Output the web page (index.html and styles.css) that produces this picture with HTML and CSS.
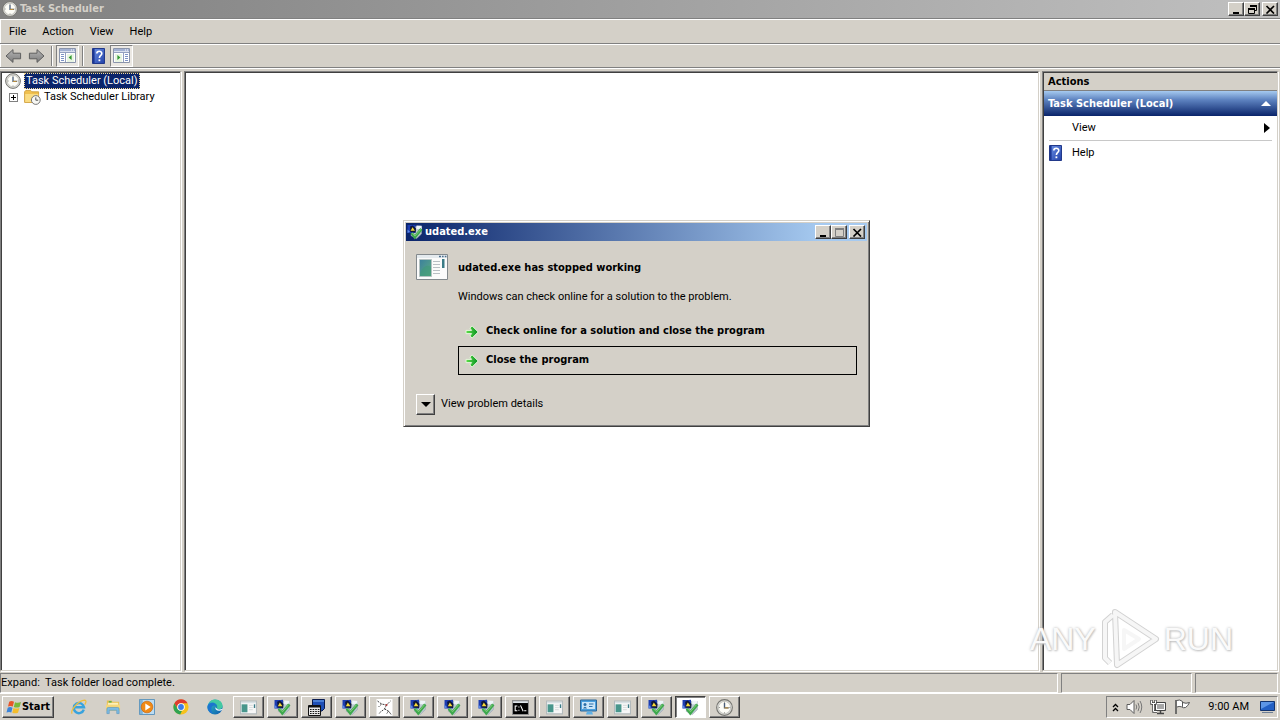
FILE: index.html
```html
<!DOCTYPE html>
<html lang="en">
<head>
<meta charset="utf-8">
<meta name="viewport" content="width=device-width, initial-scale=1">
<title>Task Scheduler</title>
<link rel="stylesheet" href="styles.css">
</head>
<body>
<svg class="defs" aria-hidden="true">
  <defs>
    <linearGradient id="g-blue" x1="0" y1="0" x2="1" y2="1"><stop offset="0" stop-color="#6d93e6"/><stop offset="1" stop-color="#2140a8"/></linearGradient>
    <linearGradient id="g-grey" x1="0" y1="0" x2="0" y2="1"><stop offset="0" stop-color="#b4b4b4"/><stop offset="1" stop-color="#7c7c7c"/></linearGradient>
    <linearGradient id="g-teal" x1="0" y1="0" x2="1" y2="1"><stop offset="0" stop-color="#3b7f9c"/><stop offset="1" stop-color="#5fae83"/></linearGradient>
    <linearGradient id="g-edge" x1="0" y1="0" x2="1" y2="1"><stop offset="0" stop-color="#36c5c0"/><stop offset="1" stop-color="#0a56b0"/></linearGradient>
    <linearGradient id="g-go" x1="0" y1="0" x2="1" y2="0"><stop offset="0" stop-color="#5fe04a"/><stop offset="1" stop-color="#078f22"/></linearGradient>
  </defs>
  <symbol id="clock" viewBox="0 0 16 16">
    <circle cx="8" cy="8" r="7.4" fill="#d9d9d6" stroke="#74746f"/>
    <circle cx="8" cy="8" r="5.7" fill="#fdfdf8" stroke="#b5b5ae" stroke-width=".6"/>
    <path d="M8 2.6v1.2M8 12.4v1.2M2.6 8h1.2M12.4 8h1.2" stroke="#8f8f8a" stroke-width=".8"/>
    <path d="M8 3.8V8.4H12" fill="none" stroke="#4a5d78" stroke-width="1.3"/>
    <path d="M8 8.4H11.6" stroke="#c9953a" stroke-width="1"/>
  </symbol>
  <symbol id="folder" viewBox="0 0 17 16">
    <path d="M.6 2.800 1.800 1.400H6.600L8 2.800H14.600V13.400H.6Z" fill="#f0c04e" stroke="#c9952c" stroke-width=".8"/>
    <path d="M1.200 5H14.200V13H1.200Z" fill="#fadc83"/>
    <circle cx="11.800" cy="11" r="4.400" fill="#f7f7f3" stroke="#777" stroke-width="1"/>
    <path d="M11.800 8.400V11.200H14.200" fill="none" stroke="#555" stroke-width="1"/>
  </symbol>
  <symbol id="back" viewBox="0 0 17 16">
    <path d="M1 8 8 1.6V5.2H15.6V10.8H8V14.4Z" fill="url(#g-grey)" stroke="#5f5f5f" stroke-linejoin="round"/>
  </symbol>
  <symbol id="forward" viewBox="0 0 17 16">
    <path d="M16 8 9 1.6V5.2H1.4V10.8H9V14.4Z" fill="url(#g-grey)" stroke="#5f5f5f" stroke-linejoin="round"/>
  </symbol>
  <symbol id="help" viewBox="0 0 13 16">
    <path d="M.5.5H12.5V15.5H.5Z" fill="url(#g-blue)" stroke="#22398a"/>
    <path d="M1 .8H2.6V15.2H1Z" fill="#1c3794"/>
    <path d="M4.8 5.6C4.8 2.6 9.8 2.6 9.8 5.4 9.8 7.4 7.4 7.4 7.4 10" fill="none" stroke="#fff" stroke-width="1.6"/>
    <path d="M6.5 11.4H8.3V13.2H6.5Z" fill="#fff"/>
  </symbol>
  <symbol id="tree-pane" viewBox="0 0 17 15">
    <path d="M.5.5H16.5V14.5H.5Z" fill="#fff" stroke="#8a94ab"/>
    <path d="M1 1H16V3.4H1Z" fill="#a3b1d3"/><path d="M12 2h1M14 2h1" stroke="#fff"/>
    <path d="M1 4.5H16" stroke="#93a0bf"/><path d="M6.5 5V14" stroke="#93a0bf"/>
    <path d="M2 6.5H5M2 8.5H5M2 10.5H5M2 12.5H5" stroke="#7d93c6"/>
    <path d="M8 6H15V14H8Z" fill="#e9f5e3"/>
    <path d="M12.6 7V12L9.6 9.5Z" fill="#329a32"/>
  </symbol>
  <symbol id="action-pane" viewBox="0 0 17 15">
    <path d="M.5.5H16.5V14.5H.5Z" fill="#fff" stroke="#8a94ab"/>
    <path d="M1 1H16V3.4H1Z" fill="#a3b1d3"/><path d="M12 2h1M14 2h1" stroke="#fff"/>
    <path d="M1 4.5H16" stroke="#93a0bf"/><path d="M10.5 5V14" stroke="#93a0bf"/>
    <path d="M12 6.5H15M12 8.5H15M12 10.5H15M12 12.5H15" stroke="#7d93c6"/>
    <path d="M2 6H9V14H2Z" fill="#e9f5e3"/>
    <path d="M4.4 7V12L7.4 9.5Z" fill="#329a32"/>
  </symbol>
  <symbol id="installer" viewBox="0 0 16 16">
    <path d="M6 2.600 14.600 2.400 14.400 10 9.600 14.600 4 11.600Z" fill="#bcc8d2" stroke="#97a3ae" stroke-width=".6"/>
    <path d="M.5 1H6.200L8.500 .8V9H.5Z" fill="#1c3cb0"/>
    <path d="M3 2.600 5.600 1.400 9 4.600 8.600 8.400 3.400 8Z" fill="#0e1638"/>
    <path d="M.5 5.400 3 7.800 .5 9Z" fill="#5c8ae6"/>
    <path d="M5.500 3.200 8 6.800H3.600Z" fill="#f6d93a"/>
    <path d="M9.500 1.400 14.600 1.800V5L9.500 5Z" fill="#eef3f8"/>
    <path d="M4.600 9 7.800 13.200 14.400 5" fill="none" stroke="#3da84c" stroke-width="2.800"/>
    <path d="M5.200 9.100 8 12 13.600 5.400" fill="none" stroke="#8ed482" stroke-width=".8"/>
  </symbol>
  <symbol id="app" viewBox="0 0 32 26">
    <path d="M.5.5H31.5V25.5H.5Z" fill="#fbfbfb" stroke="#83898d"/>
    <path d="M1 1H31V4H1Z" fill="#e4eaee"/>
    <path d="M23 2.500h2M26 2.500h1.600M28.800 2.500h1.600" stroke="#4b6f8f" stroke-width="1.400"/>
    <path d="M3.500 5.500H15.500V22.500H3.500Z" fill="url(#g-teal)" stroke="#b5c2c2"/>
    <path d="M4 19Q9 9 15 13V22H4Z" fill="#3f9a78" opacity=".6"/>
    <path d="M17 7.500H24M17 10.500H24M17 13.500H24M17 16.500H24M17 19.500H24" stroke="#b9bfc4"/>
    <path d="M26 5V14H28.500V5Z" fill="#3a7b86"/>
  </symbol>
  <symbol id="app-small" viewBox="0 0 16 13">
    <path d="M.5.5H15.500V12.500H.5Z" fill="#f7f7f7" stroke="#b3babc"/>
    <path d="M1 1H15V2.500H1Z" fill="#d8e0e4"/>
    <path d="M1.500 3.500H7V11H1.500Z" fill="#48968c"/>
    <path d="M8.500 4.500H12M8.500 6.500H12M8.500 8.500H12" stroke="#dcdfe0"/>
    <path d="M13 3.500H14.300V7H13Z" fill="#3a7b86"/>
  </symbol>
  <symbol id="calc" viewBox="0 0 17 17">
    <path d="M4.500.5H16.500V9.500L14 12H4.500Z" fill="#1f4fb5" stroke="#0a1b4e"/>
    <path d="M5 1H16V3H5Z" fill="#4a7fd6"/>
    <path d="M.5 6.500H12.500V16.500H.5Z" fill="#e9e9e9" stroke="#111"/>
    <path d="M1 7H12V8.500H1Z" fill="#111"/>
    <path d="M2 10.500H11.500M2 12.500H11.500M2 14.500H11.500" stroke="#111" stroke-width="1.200" stroke-dasharray="1.600 1"/>
  </symbol>
  <symbol id="cursor-file" viewBox="0 0 16 17">
    <path d="M0 0H16V17H0Z" fill="#fff"/>
    <path d="M1 2 5 5 10 6 14 2M10 6 8 10 4 13 2 15M8 10 12 12 15 16M5 5 2 8M12 12 10 15" fill="none" stroke="#444" stroke-width="1" stroke-dasharray="2 1"/>
    <circle cx="10" cy="6" r="1" fill="#b43a3a"/>
  </symbol>
  <symbol id="ie" viewBox="0 0 17 17">
    <path d="M13.600 11.300A5.400 5.400 0 1 1 13.800 8.800H4" fill="none" stroke="#39a3dd" stroke-width="2.600"/>
    <path d="M1.200 15.600C-1 12 8 1.500 14.400 1.200 17 1.400 15.600 4.600 14.600 6" fill="none" stroke="#efbe3c" stroke-width="1.300"/>
  </symbol>
  <symbol id="explorer" viewBox="0 0 17 16">
    <path d="M2 1H7L8 2.500H15V9H2Z" fill="#e8bf51"/>
    <path d="M3 3.500H14V9H3Z" fill="#fdf0b8"/><path d="M4 2.500H7" stroke="#4cae52" stroke-width="1.500"/>
    <path d="M1 5.500H16V12H1Z" fill="#f6d77a"/>
    <path d="M2 15V10Q2 8.500 3.500 8.500H13.500Q15 8.500 15 10V15H12.500V11.500H4.500V15Z" fill="#7dbbe2" stroke="#4c90bf" stroke-width=".6"/>
  </symbol>
  <symbol id="media" viewBox="0 0 17 17">
    <path d="M.5.5H16.500V16.500H.5Z" fill="#bcdcf2" stroke="#5b92bb"/>
    <path d="M1 1H4V16H1Z" fill="#7fb3d8"/>
    <circle cx="8.500" cy="8.500" r="6.200" fill="#f08a16" stroke="#c9640a" stroke-width=".7"/>
    <path d="M6.700 4.800V12.200L12.400 8.500Z" fill="#fff"/>
  </symbol>
  <symbol id="chrome" viewBox="0 0 16 16">
    <circle cx="8" cy="8" r="7.600" fill="#f6c21c"/>
    <path d="M1.400 4.200A7.600 7.600 0 0 1 14.600 4.200H8A3.800 3.800 0 0 0 4.600 9.700Z" fill="#de3b2f"/>
    <path d="M1.400 4.200 4.700 9.900Q6 12 9 11.700L7.200 15.600A7.600 7.600 0 0 1 1.400 4.200Z" fill="#2fa352"/>
    <circle cx="8" cy="8" r="3.800" fill="#fff"/><circle cx="8" cy="8" r="2.900" fill="#3b7de8"/>
  </symbol>
  <symbol id="edge" viewBox="0 0 16 16">
    <circle cx="8" cy="8" r="7.600" fill="url(#g-edge)"/>
    <path d="M.5 7C2 2.500 9 2.500 9.800 7.500 5 4.500 2.500 9.500 6 14.500 2.500 14 0 11 .5 7Z" fill="#1c75cf"/>
    <path d="M8 .4C13 .4 15.600 3.600 15.600 7.200 15.600 9.800 12 10.800 10 9.400 11.600 4.600 6 2 2 4 3.500 1.500 6 .4 8 .4Z" fill="#43c9a2"/>
    <path d="M8.300 8.200Q8 11.500 12 11.800 14 12 15.500 10.500 16 9 13.500 10.300 11 10.800 9.800 9.600Z" fill="#e8f4fb"/>
  </symbol>
  <symbol id="start" viewBox="0 0 16 15">
    <path d="M3.200 1.800Q5.400.4 8 1.800L6.800 6.600Q4.400 5.400 2 6.600Z" fill="#e8562a"/>
    <path d="M9 2.200Q12 3.400 15 2L13.600 6.900Q10.600 8 7.800 6.900Z" fill="#79b93a"/>
    <path d="M1.700 7.700Q4 6.500 6.500 7.700L5.300 12.400Q2.800 11.400.5 12.600Z" fill="#3b84d9"/>
    <path d="M7.500 8Q10.400 9.200 13.400 8L12 12.800Q9 13.900 6.300 12.800Z" fill="#f4bd2c"/>
  </symbol>
  <symbol id="cmd" viewBox="0 0 16 14">
    <path d="M.5.5H15.500V13.500H.5Z" fill="#000" stroke="#8f8f8f"/>
    <path d="M1 1H15V2.800H1Z" fill="#dfe5ea"/>
    <path d="M5 5.500H3V10H5M6.500 6V7M6.500 9V10M8 5 10.500 10.500M11.500 10H13.500" fill="none" stroke="#fff"/>
  </symbol>
  <symbol id="display" viewBox="0 0 17 16">
    <path d="M.5.5H16.500V11.500H.5Z" fill="#4aa0de" stroke="#2a6699"/>
    <path d="M2 2.500H15V9.500H2Z" fill="#c9e5f8"/>
    <circle cx="5" cy="5" r="1.500" fill="#2b6fa8"/><path d="M3 9Q5 5.500 7 9Z" fill="#2b6fa8"/>
    <path d="M9 4.500H13.500M9 7H12.500" stroke="#2b6fa8" stroke-width="1.200"/>
    <path d="M7 12H12L13 15H6Z" fill="#5fb0e6"/>
  </symbol>
  <symbol id="speaker" viewBox="0 0 17 16">
    <path d="M1 5.500H4L8 1.500V14.500L4 10.500H1Z" fill="#fff" stroke="#5d5d5d"/>
    <path d="M10 5.500Q11.500 8 10 10.500M12 3.800Q14.500 8 12 12.200M14 2Q17.500 8 14 14" fill="none" stroke="#777"/>
  </symbol>
  <symbol id="network" viewBox="0 0 17 16">
    <path d="M5.500 3.500H15.500V11.500H5.500Z" fill="#a7a7a7" stroke="#444"/>
    <path d="M6.500 4.500H14.500V10.500H6.500Z" fill="none" stroke="#fff"/>
    <path d="M10.500 12V14M7 14.500H14" stroke="#444" stroke-width="1.500"/>
    <path d="M1.500 1V4.500H5.500V1M3.500 4.500V12.500H7" fill="none" stroke="#444" stroke-width="2.400"/>
    <path d="M1.500 1.500V4.500H5.500V1.500M3.500 4.500V12.500H7" fill="none" stroke="#fff" stroke-width="1"/>
  </symbol>
  <symbol id="flag" viewBox="0 0 17 16">
    <path d="M2.500 1.500Q6 0 8.500 2.500V3.500Q12 5 15.500 3.500 14 7 11.500 8.500 9.500 9.300 7.500 7.800 5 7 3 8" fill="#fff" stroke="#555"/>
    <path d="M8.500 3V7.800" stroke="#555"/><path d="M2 1V15" stroke="#555" stroke-width="1.600"/>
  </symbol>
  <symbol id="desktop" viewBox="0 0 15 12">
    <path d="M.5.5H14.500V9.500H.5Z" fill="#2360c4" stroke="#12346f"/>
    <path d="M1 1H14L1 8Z" fill="#5d96e6"/><path d="M2 11.500H13" stroke="#6e7f95"/>
  </symbol>
  <symbol id="go" viewBox="0 0 14 14">
    <path d="M1 5.400H6.600L4.800 3 7.200 1 13.200 7 7.200 13 4.800 11 6.600 8.600H1Z" fill="url(#g-go)" stroke="#e4f7da" stroke-width="1"/>
  </symbol>
  <symbol id="min" viewBox="0 0 11 9"><path d="M2 8H8" stroke="#000" stroke-width="2"/></symbol>
  <symbol id="restore" viewBox="0 0 11 9"><path d="M3.500 2V.5H9.500V5.500H8" fill="none" stroke="#000"/><path d="M3 1H10" stroke="#000" stroke-width="2"/><path d="M1.500 4.500H7.500V8.500H1.500Z" fill="none" stroke="#000"/><path d="M1 4H8" stroke="#000" stroke-width="2"/></symbol>
  <symbol id="max" viewBox="0 0 11 9"><path d="M1.500.5H9.500V8.500H1.500Z" fill="none" stroke="#808080"/><path d="M1 1H10" stroke="#808080" stroke-width="2"/></symbol>
  <symbol id="close" viewBox="0 0 11 9"><path d="M1.500 1 9 8.500M9 1 1.500 8.500" stroke="#000" stroke-width="1.700"/></symbol>
</svg>

<div class="desktop">
  <header class="titlebar">
    <svg class="i16"><use href="#clock"/></svg>
    <h1>Task Scheduler</h1>
    <div class="caps">
      <button class="cap" aria-label="Minimize"><svg><use href="#min"/></svg></button>
      <button class="cap" aria-label="Restore"><svg><use href="#restore"/></svg></button>
      <button class="cap gap" aria-label="Close"><svg><use href="#close"/></svg></button>
    </div>
  </header>
  <nav class="menu">
    <button>File</button><button>Action</button><button>View</button><button>Help</button>
  </nav>
  <div class="toolbar">
    <button class="tool" aria-label="Back"><svg class="i17"><use href="#back"/></svg></button>
    <button class="tool" aria-label="Forward"><svg class="i17"><use href="#forward"/></svg></button>
    <span class="sep"></span>
    <button class="tool pressed" aria-label="Show or hide console tree"><svg class="pane-icon"><use href="#tree-pane"/></svg></button>
    <span class="sep"></span>
    <button class="tool" aria-label="Help"><svg class="help-icon"><use href="#help"/></svg></button>
    <button class="tool pressed" aria-label="Show or hide action pane"><svg class="pane-icon"><use href="#action-pane"/></svg></button>
  </div>

  <main class="panes">
    <section class="pane tree">
      <div class="node"><svg class="i16"><use href="#clock"/></svg><span class="label selected">Task Scheduler (Local)</span></div>
      <div class="node child"><button class="plus" aria-label="Expand"></button><svg class="i17"><use href="#folder"/></svg><span class="label">Task Scheduler Library</span></div>
    </section>
    <section class="pane content"></section>
    <aside class="pane actions">
      <h2>Actions</h2>
      <button class="group">Task Scheduler (Local)<span class="up"></span></button>
      <button class="action"><span class="slot"></span>View<span class="right"></span></button>
      <hr>
      <button class="action"><span class="slot"><svg class="help-icon"><use href="#help"/></svg></span>Help</button>
      <div class="mark"><span>ANY</span><svg viewBox="0 0 60 62"><path d="M10 55 5 50V14L13 7M15 4 56 31 17 57Z" fill="none" stroke="#d2d2d2" stroke-width="6" stroke-linejoin="round"/><path d="M10 55 5 50V14L13 7M15 4 56 31 17 57ZM24 22 39 31 24 41Z" fill="none" stroke="#f6f6f6" stroke-width="4" stroke-linejoin="round"/></svg><span>RUN</span></div>
    </aside>
  </main>

  <footer class="status"><span class="cell first">Expand:&nbsp; Task folder load complete.</span><span class="cell second"></span><span class="cell third"></span></footer>

  <nav class="taskbar">
    <button class="start"><svg><use href="#start"/></svg>Start</button>
    <div class="quick">
      <button aria-label="Internet Explorer"><svg><use href="#ie"/></svg></button>
      <button aria-label="Windows Explorer"><svg><use href="#explorer"/></svg></button>
      <button aria-label="Media Player"><svg><use href="#media"/></svg></button>
      <button aria-label="Chrome"><svg><use href="#chrome"/></svg></button>
      <button aria-label="Edge"><svg><use href="#edge"/></svg></button>
    </div>
    <div class="tasks">
      <button aria-label="Application"><svg><use href="#app-small"/></svg></button>
      <button aria-label="udated.exe"><svg><use href="#installer"/></svg></button>
      <button aria-label="Calculator"><svg><use href="#calc"/></svg></button>
      <button aria-label="udated.exe"><svg><use href="#installer"/></svg></button>
      <button aria-label="File"><svg><use href="#cursor-file"/></svg></button>
      <button aria-label="udated.exe"><svg><use href="#installer"/></svg></button>
      <button aria-label="udated.exe"><svg><use href="#installer"/></svg></button>
      <button aria-label="udated.exe"><svg><use href="#installer"/></svg></button>
      <button aria-label="Command Prompt"><svg><use href="#cmd"/></svg></button>
      <button aria-label="Application"><svg><use href="#app-small"/></svg></button>
      <button aria-label="Display"><svg><use href="#display"/></svg></button>
      <button aria-label="Application"><svg><use href="#app-small"/></svg></button>
      <button aria-label="udated.exe"><svg><use href="#installer"/></svg></button>
      <button class="active" aria-label="udated.exe"><svg><use href="#installer"/></svg></button>
      <button aria-label="Task Scheduler"><svg><use href="#clock"/></svg></button>
    </div>
    <div class="tray">
      <button aria-label="Show hidden icons"><svg class="chev" viewBox="0 0 7 9"><path d="M1 4 3.500 1.500 6 4M1 8 3.500 5.500 6 8" fill="none" stroke="#000" stroke-width="1.300"/></svg></button>
      <svg class="i17"><use href="#speaker"/></svg>
      <svg class="i17"><use href="#network"/></svg>
      <svg class="i17"><use href="#flag"/></svg>
      <time>9:00 AM</time>
      <svg class="monitor"><use href="#desktop"/></svg>
    </div>
  </nav>

  <section class="dialog" role="dialog" aria-labelledby="dialog-title">
    <header class="dialog-title">
      <svg class="i16"><use href="#installer"/></svg>
      <h2 id="dialog-title">udated.exe</h2>
      <div class="caps">
        <button class="cap" aria-label="Minimize"><svg><use href="#min"/></svg></button>
        <button class="cap" aria-label="Maximize" disabled><svg><use href="#max"/></svg></button>
        <button class="cap gap" aria-label="Close"><svg><use href="#close"/></svg></button>
      </div>
    </header>
    <div class="dialog-body">
      <svg class="app-icon"><use href="#app"/></svg>
      <div class="message">
        <h3>udated.exe has stopped working</h3>
        <p>Windows can check online for a solution to the problem.</p>
        <button class="command"><svg><use href="#go"/></svg>Check online for a solution and close the program</button>
        <button class="command focused"><svg><use href="#go"/></svg>Close the program</button>
      </div>
    </div>
    <div class="details">
      <button class="drop" id="details" aria-labelledby="details-label"></button>
      <label id="details-label" for="details">View problem details</label>
    </div>
  </section>
</div>
</body>
</html>
```
FILE: styles.css
```css
* { box-sizing: border-box; }
body {
  margin: 0;
  background: #d4d0c8;
  color: #000;
  font: 11px/16px Roboto, "DejaVu Sans Condensed", sans-serif;
}
h1, h2, h3, p { margin: 0; font-size: 11px; }
h1, h2, h3, .group, .command, .start { font-family: "DejaVu Sans Condensed", "DejaVu Sans", sans-serif; }
button {
  margin: 0;
  padding: 0;
  border: 0;
  background: none;
  color: inherit;
  font-family: inherit;
  font-size: 11px;
  line-height: 16px;
  text-align: left;
}
svg { display: block; flex: none; }
.defs { position: absolute; width: 0; height: 0; }
.i16 { width: 16px; height: 16px; }
.i17 { width: 17px; height: 16px; }
.help-icon { width: 13px; height: 16px; }
.pane-icon { width: 17px; height: 15px; }

.desktop {
  position: relative;
  display: flex;
  flex-direction: column;
  height: 100vh;
  overflow: hidden;
}

.titlebar {
  display: flex;
  align-items: center;
  gap: 2px;
  height: 18px;
  padding: 0 2px;
  background: linear-gradient(90deg, #808080, #c0c0c0);
  color: #d4d0c8;
}
.caps { display: flex; margin-left: auto; }
.cap {
  display: flex;
  align-items: center;
  justify-content: center;
  width: 16px;
  height: 14px;
  border: 1px solid;
  border-color: #fff #404040 #404040 #fff;
  background: #d4d0c8;
  box-shadow: inset -1px -1px #808080;
}
.cap svg { width: 11px; height: 9px; }
.gap { margin-left: 2px; }

.menu {
  display: flex;
  align-items: center;
  gap: 16px;
  height: 26px;
  padding: 1px 9px 0;
  border-top: 1px solid #808080;
  border-bottom: 1px solid #808080;
  box-shadow: inset 1px 1px #fff;
}
.toolbar {
  display: flex;
  align-items: center;
  height: 24px;
  padding-left: 2px;
  border-bottom: 1px solid #808080;
  box-shadow: inset 1px 1px #fff;
}
.tool {
  display: flex;
  align-items: center;
  justify-content: center;
  width: 23px;
  height: 22px;
}
.tool.pressed {
  border: 1px solid;
  border-color: #808080 #fff #fff #808080;
  background: #ebe8e3;
}
.sep {
  width: 2px;
  height: 20px;
  margin: 0 3px;
  border-left: 1px solid #808080;
  border-right: 1px solid #fff;
}

.panes {
  display: grid;
  grid-template-columns: 181px 1fr 236px;
  gap: 3px;
  flex: 1;
  min-height: 0;
  padding: 2px 2px 0 0;
  border-top: 1px solid #fff;
}
.pane {
  min-width: 0;
  background: #fff;
  border: 1px solid;
  border-color: #808080 #d4d0c8 #d4d0c8 #808080;
  box-shadow: inset 1px 1px #404040, 1px 1px #fff;
}
.tree { padding: 1px 4px; }
.node { display: flex; align-items: center; gap: 3px; }
.child { padding-left: 4px; }
.label { white-space: nowrap; }
.selected { padding: 0 2px; background: #0a246a; color: #fff; outline: 1px dotted #f5db95; outline-offset: -1px; }
.plus {
  width: 9px;
  height: 9px;
  margin-right: 3px;
  border: 1px solid #808080;
  background:
    linear-gradient(#000, #000) center / 5px 1px no-repeat,
    linear-gradient(#000, #000) center / 1px 5px no-repeat;
}

.actions { position: relative; display: flex; flex-direction: column; padding: 1px 0 0 1px; }
.actions h2 { padding: 1px 4px 0; background: #d4d0c8; border-bottom: 1px solid #808080; }
.group {
  display: flex;
  align-items: center;
  justify-content: space-between;
  height: 25px;
  padding: 0 6px 0 4px;
  background: linear-gradient(#a6caf0, #5e83c0 35%, #0a246a);
  color: #fff;
  font-weight: bold;
}
.up { border: 5px solid transparent; border-top: 0; border-bottom-color: #fff; }
.right { margin-left: auto; border: 5px solid transparent; border-left: 6px solid #000; border-right: 0; }
.action { display: flex; align-items: center; height: 24px; padding: 0 7px 0 5px; }
.slot { width: 23px; }
.actions hr { align-self: stretch; height: 1px; margin: 0 5px; border: 0; background: #c8c8c8; }
.mark {
  position: absolute;
  right: 44px;
  bottom: 0;
  display: flex;
  align-items: center;
  gap: 4px;
  color: #fafafa;
  font: 32px/62px "Liberation Sans", sans-serif;
  text-shadow: 0 0 3px #b8b8b8, 1px 1px 2px #ccc;
}
.mark svg { width: 60px; height: 62px; }

.status { display: flex; gap: 3px; height: 20px; margin-top: 2px; padding-right: 2px; }
.cell { border: 1px solid; border-color: #808080 #fff #fff #808080; line-height: 18px; }
.first { flex: 1; }
.second { width: 131px; }
.third { width: 83px; }

.taskbar {
  display: flex;
  align-items: center;
  height: 27px;
  border-top: 1px solid #fff;
  padding: 0 2px;
}
.taskbar button { display: flex; align-items: center; justify-content: center; }
.start, .tasks button {
  height: 22px;
  border: 1px solid;
  border-color: #fff #404040 #404040 #fff;
  box-shadow: inset -1px -1px #808080;
}
.taskbar .start { width: 52px; font-weight: bold; }
.start svg { width: 16px; height: 15px; }
.quick { display: flex; margin-left: 8px; }
.quick button { width: 34px; height: 22px; }
.quick svg { width: 16px; height: 16px; }
.tasks { display: flex; gap: 3px; margin-left: 1px; }
.tasks button { width: 31px; }
.tasks svg { width: 17px; height: 17px; }
.tasks .active { border-color: #404040 #fff #fff #404040; background: #fff; box-shadow: inset 1px 1px #808080; }
.tray {
  display: flex;
  align-items: center;
  gap: 7px;
  height: 22px;
  margin-left: auto;
  padding: 0 2px 0 5px;
  border: 1px solid;
  border-color: #808080 #fff #fff #808080;
}
.chev { width: 7px; height: 9px; }
.tray time { margin: 0 4px 0 10px; }
.monitor { width: 15px; height: 12px; }

.dialog {
  position: absolute;
  left: 403px;
  top: 220px;
  width: 467px;
  padding: 2px;
  border: 1px solid;
  border-color: #d4d0c8 #404040 #404040 #d4d0c8;
  background: #d4d0c8;
  box-shadow: inset 1px 1px #fff, inset -1px -1px #808080;
}
.dialog-title {
  display: flex;
  align-items: center;
  gap: 2px;
  height: 18px;
  padding: 0 2px 0 1px;
  background: linear-gradient(90deg, #0a246a, #a6caf0 90%);
  color: #fff;
}
.dialog-body { display: flex; gap: 10px; padding: 13px 10px 0; }
.app-icon { width: 32px; height: 26px; }
.message { flex: 1; padding-top: 6px; }
.message p { margin: 13px 0 12px; }
.command {
  display: flex;
  align-items: center;
  gap: 7px;
  width: 100%;
  height: 29px;
  padding: 0 6px 2px;
  border: 1px solid transparent;
  font-weight: bold;
}
.command svg { width: 14px; height: 14px; margin-top: 2px; }
.focused { border-color: #000; }
.details { display: flex; align-items: center; gap: 6px; padding: 19px 10px 9px; }
.details label { padding-bottom: 2px; }
.drop {
  display: flex;
  align-items: center;
  justify-content: center;
  width: 19px;
  height: 21px;
  border: 1px solid;
  border-color: #fff #404040 #404040 #fff;
  box-shadow: inset -1px -1px #808080;
}
.drop::before { content: ""; border: 5px solid transparent; border-top-color: #000; border-bottom: 0; }
```
